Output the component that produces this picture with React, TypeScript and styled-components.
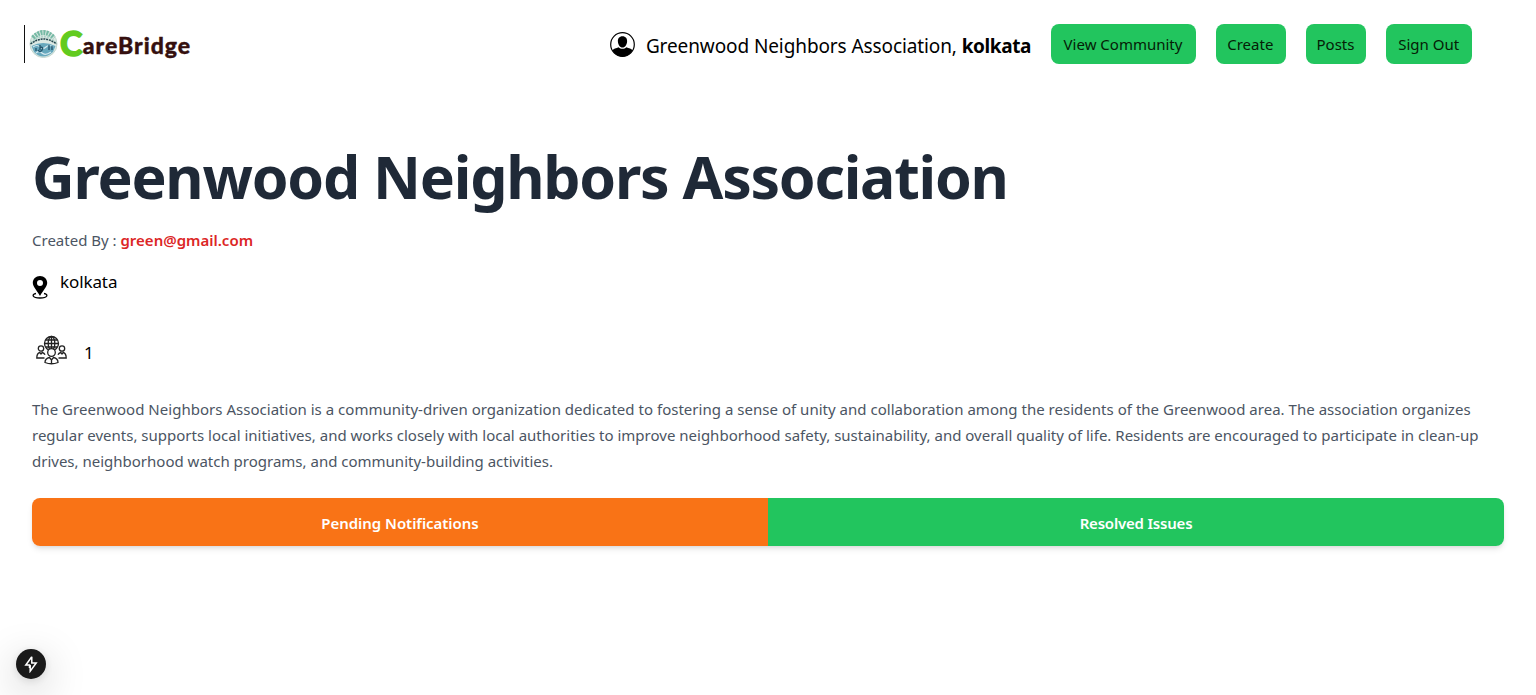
import React from 'react';
import styled, { createGlobalStyle } from 'styled-components';

const GlobalStyle = createGlobalStyle`
  *, *::before, *::after { box-sizing: border-box; }
  body {
    margin: 0;
    background: #fff;
    color: #000;
    font-family: 'Segoe UI', 'Noto Sans', 'Open Sans', sans-serif;
    font-size: 15px;
    line-height: 24px;
  }
  h1, p { margin: 0; }
`;

const Page = styled.div`
  min-height: 695px;
  overflow: hidden;
`;

const Header = styled.header`
  display: flex;
  justify-content: space-between;
  align-items: center;
  height: 88px;
  padding: 0 64px 0 24px;
`;

const Brand = styled.div`
  display: flex;
  align-items: center;
  height: 38px;
  padding-left: 4px;
  border-left: 1px solid #111;
`;

const BrandName = styled.span`
  display: flex;
  align-items: center;
  margin-left: 2px;
  font-family: Lato, sans-serif;
  font-weight: 900;
  font-size: 23px;
  line-height: 36px;
  letter-spacing: 1px;
  color: #35100f;
  -webkit-text-stroke: 0.4px currentColor;
`;

const BrandInitial = styled.span`
  padding-bottom: 2px;
  font-size: 34px;
  letter-spacing: 0.3px;
  color: #62cb1f;
  -webkit-text-stroke: 1.4px currentColor;
`;

const BrandRest = styled.span`
  padding-top: 1px;
`;

const Nav = styled.nav`
  display: flex;
  align-items: center;
  gap: 20px;
`;

const Account = styled.div`
  display: flex;
  align-items: center;
  gap: 11px;
  font-size: 19px;
  line-height: 28px;
  white-space: nowrap;
`;

const AccountName = styled.span`
  padding-top: 3px;
  letter-spacing: -0.1px;

  b { letter-spacing: -0.4px; }
`;

const NavButton = styled.button<{ $width: number }>`
  width: ${(p) => p.$width}px;
  height: 40px;
  padding: 0 1px 0 0;
  border: 0;
  border-radius: 8px;
  background: #22c55e;
  color: #052006;
  font: inherit;
  white-space: nowrap;
`;

const Main = styled.main`
  padding: 58px 32px 0;
`;

const Title = styled.h1`
  font-size: 59px;
  line-height: 60px;
  font-weight: 700;
  letter-spacing: -1.25px;
  color: #1f2937;
  white-space: nowrap;
`;

const Creator = styled.p`
  margin-top: 22px;
  color: #4b5563;
`;

const Email = styled.span`
  font-weight: 600;
  color: #dc2626;
`;

const Location = styled.div`
  display: flex;
  gap: 12px;
  margin-top: 16px;
  height: 32px;
  font-size: 17px;
  line-height: 28px;
  letter-spacing: -0.1px;

  svg { margin-top: 8px; }
`;

const Members = styled.div`
  display: flex;
  align-items: center;
  gap: 16px;
  margin-top: 35px;
  padding-left: 4px;
  height: 32px;
  font-size: 17px;
`;

const MemberCount = styled.span`
  padding-top: 3px;
`;

const Description = styled.p`
  margin-top: 29px;
  line-height: 26px;
  color: #4b5563;
  white-space: nowrap;
`;

const Line = styled.span<{ $spacing?: number }>`
  display: block;
  letter-spacing: ${(p) => p.$spacing ?? 0}px;
`;

const Tabs = styled.div`
  display: flex;
  margin-top: 24px;
  height: 48px;
  border-radius: 8px;
  overflow: hidden;
  box-shadow: 0 4px 6px -1px rgba(0, 0, 0, 0.1), 0 2px 4px -2px rgba(0, 0, 0, 0.1);
`;

const Tab = styled.button<{ $color: string; $spacing: number }>`
  flex: 1;
  padding: 1px 0 0;
  border: 0;
  background: ${(p) => p.$color};
  color: #fff;
  font: inherit;
  font-weight: 600;
  letter-spacing: ${(p) => p.$spacing}px;
`;

const DevBadge = styled.div`
  position: fixed;
  left: 16px;
  bottom: 16px;
  display: flex;
  align-items: center;
  justify-content: center;
  width: 30px;
  height: 30px;
  border-radius: 50%;
  background: #1a1a1a;
  box-shadow: 0 11px 40px rgba(0, 0, 0, 0.25), 0 2px 10px rgba(0, 0, 0, 0.12);
`;

const Emblem = () => (
  <svg width="29" height="30" viewBox="0 0 29 30">
    <circle cx="14.5" cy="15" r="13.5" fill="#dce9e4" stroke="#c3d6cf" />
    <path d="M4 9Q14.5-2 25 9" fill="none" stroke="#75b9a4" strokeWidth="5" strokeDasharray="2 1" />
    <path d="M2 14Q14 1 27 14" fill="none" stroke="#b2d4cc" strokeWidth="2" strokeDasharray="2 1" />
    <path d="M1.500 15Q14.500 5 27.500 15" fill="none" stroke="#20434b" strokeWidth="1.500" strokeDasharray="2 .8" />
    <path d="M2.500 17Q14 11 26.500 17L24 23Q14 32 5 23Z" fill="#67a8bd" />
    <path d="M4 18q4-3 7 0t6 0 7 0M7 24q3-3 6 0t9-1" fill="none" stroke="#d7eaf0" strokeWidth="1.200" />
    <path d="M11 16v5M11 18q4 0 2 3t-4 0M20 16v5M23 17v4M7 19v3" fill="none" stroke="#24566d" strokeWidth="1.400" />
  </svg>
);

const UserIcon = () => (
  <svg width="25" height="25" viewBox="0 0 25 25">
    <circle cx="12.5" cy="12.5" r="11.8" fill="#fff" stroke="#000" strokeWidth="1.2" />
    <path d="M12.5 4.2c3.2 0 4.8 2.3 4.6 5.3-.2 3.3-2 6-4.6 6s-4.4-2.700-4.600-6c-.2-3 1.400-5.300 4.600-5.300Z" />
    <path d="M2.500 18.500c1-1.800 3.500-2.200 6.200-3.200 1.800 2 5.800 2 7.600 0 2.700 1 5.200 1.400 6.200 3.200-2 3.700-5.400 6-10 6s-8-2.300-10-6Z" />
  </svg>
);

const PinIcon = () => (
  <svg width="16" height="23" viewBox="0 0 16 23">
    <path d="M4 17.500C-.5 18.300-.2 22 8 22s8.500-3.700 4-4.500" fill="none" stroke="#000" strokeWidth="1.300" />
    <path fillRule="evenodd" d="M8 0C3.800 0 .8 3 .8 6.800 .8 11 5 14.500 8 20c3-5.500 7.200-9 7.200-13.200C15.200 3 12.200 0 8 0Zm0 4a3 3 0 1 1 0 6A3 3 0 0 1 8 4Z" />
  </svg>
);

const CommunityIcon = () => (
  <svg width="32" height="32" viewBox="0 0 32 32" fill="none" stroke="#222" strokeWidth="1.300">
    <circle cx="15.500" cy="8.500" r="7" />
    <ellipse cx="15.500" cy="8.500" rx="3.300" ry="7" />
    <path d="M15.500 1.500v14M8.500 8.500h14M9.700 5h11.600M9.700 12h11.600" />
    <circle cx="15.500" cy="17.500" r="3.800" fill="#fff" />
    <path d="M9 27.500c0-3.500 2-4.500 4.500-5l2 2.500 2-2.500c2.500.5 4.500 1.500 4.500 5Q15.500 30 9 27.500ZM15.500 25v3.500" fill="#fff" />
    <circle cx="5" cy="13.500" r="2.700" />
    <circle cx="26" cy="13.500" r="2.700" />
    <path d="M8.500 23H.800c0-3.500 1-5 3-5.500L5 19l1.200-1.500c1.300.3 2.300 1 2.800 2.200M22.500 23h7.700c0-3.500-1-5-3-5.500L26 19l-1.200-1.500c-1.300.3-2.300 1-2.800 2.200" />
  </svg>
);

const BoltIcon = () => (
  <svg width="14" height="18" viewBox="0 0 14 18" fill="none" stroke="#fff" strokeWidth="1.500">
    <path d="M7.800 1.800 1.800 10H5.500V13M7.800 1.800V8h4.400L6.200 16.200V10" />
  </svg>
);

export default function App() {
  return (
    <Page>
      <GlobalStyle />
      <Header>
        <Brand>
          <Emblem />
          <BrandName><BrandInitial>C</BrandInitial><BrandRest>areBridge</BrandRest></BrandName>
        </Brand>
        <Nav>
          <Account>
            <UserIcon />
            <AccountName>Greenwood Neighbors Association, <b>kolkata</b></AccountName>
          </Account>
          <NavButton $width={145}>View Community</NavButton>
          <NavButton $width={69.6}>Create</NavButton>
          <NavButton $width={60.8}>Posts</NavButton>
          <NavButton $width={85.6}>Sign Out</NavButton>
        </Nav>
      </Header>
      <Main>
        <Title>Greenwood Neighbors Association</Title>
        <Creator>Created By : <Email>green@gmail.com</Email></Creator>
        <Location><PinIcon />kolkata</Location>
        <Members><CommunityIcon /><MemberCount>1</MemberCount></Members>
        <Description>
          <Line $spacing={0.023}>The Greenwood Neighbors Association is a community-driven organization dedicated to fostering a sense of unity and collaboration among the residents of the Greenwood area. The association organizes</Line>
          <Line $spacing={0.006}>regular events, supports local initiatives, and works closely with local authorities to improve neighborhood safety, sustainability, and overall quality of life. Residents are encouraged to participate in clean-up</Line>
          <Line>drives, neighborhood watch programs, and community-building activities.</Line>
        </Description>
        <Tabs>
          <Tab $color="#f97316" $spacing={-0.04}>Pending Notifications</Tab>
          <Tab $color="#22c55e" $spacing={-0.2}>Resolved Issues</Tab>
        </Tabs>
      </Main>
      <DevBadge><BoltIcon /></DevBadge>
    </Page>
  );
}
